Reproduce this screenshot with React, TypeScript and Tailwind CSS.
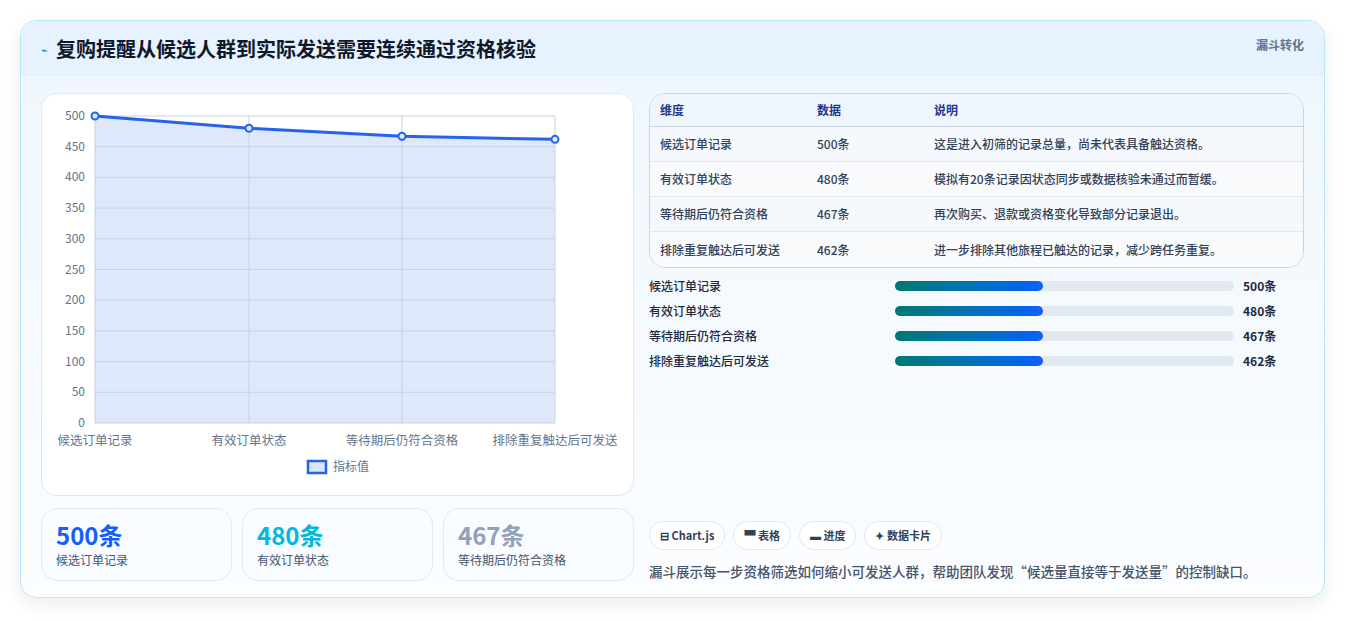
const rows = [
  { name: "候选订单记录", v: 500, note: "这是进入初筛的记录总量，尚未代表具备触达资格。" },
  { name: "有效订单状态", v: 480, note: "模拟有20条记录因状态同步或数据核验未通过而暂缓。" },
  { name: "等待期后仍符合资格", v: 467, note: "再次购买、退款或资格变化导致部分记录退出。" },
  { name: "排除重复触达后可发送", v: 462, note: "进一步排除其他旅程已触达的记录，减少跨任务重复。" },
];

function Chart() {
  const L = 53, R = 513, T = 22, B = 329;
  const xs = [L, 207, 360, R];
  const y = (v: number) => B - (v / 500) * (B - T);
  const pts = rows.map((r, i) => `${xs[i]},${y(r.v)}`).join(" ");
  const ticks = [0, 50, 100, 150, 200, 250, 300, 350, 400, 450, 500];
  return (
    <svg width="593" height="400" className="block">
      <polygon points={`${L},${B} ${pts} ${R},${B}`} fill="#dfe7fb" />
      {ticks.map((t) => (
        <g key={t}>
          <line x1={L} x2={R} y1={y(t)} y2={y(t)} stroke="#c7d2e4" strokeWidth="1" />
          <text x={43} y={y(t) + 4} textAnchor="end" fontSize="12" fill="#64748b">{t}</text>
        </g>
      ))}
      {xs.map((x) => (
        <line key={x} x1={x} x2={x} y1={T} y2={B} stroke="#c7d2e4" strokeWidth="1" />
      ))}
      <polyline points={pts} fill="none" stroke="#2563eb" strokeWidth="3" strokeLinejoin="round" />
      {rows.map((r, i) => (
        <circle key={i} cx={xs[i]} cy={y(r.v)} r="3.5" fill="#dbeafe" stroke="#2563eb" strokeWidth="2" />
      ))}
      {rows.map((r, i) => (
        <text key={r.name} x={xs[i]} y={351} textAnchor="middle" fontSize="12.5" fill="#64748b">{r.name}</text>
      ))}
      <rect x={266} y={367} width={18} height={12} fill="#dbe5fb" stroke="#2563eb" strokeWidth="2.5" />
      <text x={291} y={377} fontSize="12" fill="#64748b">指标值</text>
    </svg>
  );
}

export default function App() {
  return (
    <div className="min-h-[620px] bg-white p-5" style={{ fontFamily: '"Noto Sans CJK SC", "Noto Sans", sans-serif' }}>
      <div className="h-[578px] overflow-hidden rounded-2xl border border-sky-200 bg-gradient-to-b from-[#eef6fd] to-[#fbfdff] shadow-[0_6px_18px_rgba(15,23,42,0.08)]">
        <div className="flex h-[55px] items-start justify-between border-b border-sky-100 bg-[#e6f2fd] px-5 pt-[13px]">
          <div className="flex items-center gap-2">
            <span className="text-[11px] text-blue-600">⌁</span>
            <span className="text-[20px] font-bold text-slate-900">复购提醒从候选人群到实际发送需要连续通过资格核验</span>
          </div>
          <span className="pt-[2px] text-[12px] font-bold text-slate-500">漏斗转化</span>
        </div>
        <div className="flex gap-[15px] px-5 pt-[17px]">
          <div className="w-[593px] shrink-0">
            <div className="h-[403px] rounded-2xl border border-slate-200 bg-white">
              <Chart />
            </div>
            <div className="mt-[12px] flex gap-[10px]">
              {[
                { v: "500条", l: "候选订单记录", c: "text-blue-600" },
                { v: "480条", l: "有效订单状态", c: "text-cyan-500" },
                { v: "467条", l: "等待期后仍符合资格", c: "text-slate-400" },
              ].map((s) => (
                <div key={s.l} className="h-[73px] w-[191px] rounded-2xl border border-slate-200 bg-[#f8fbff] px-[14px] pt-[10px]">
                  <div className={`text-[24px] font-bold leading-[32px] ${s.c}`}>{s.v}</div>
                  <div className="text-[12px] text-slate-600">{s.l}</div>
                </div>
              ))}
            </div>
          </div>
          <div className="flex flex-1 flex-col">
            <div className="overflow-hidden rounded-2xl border border-slate-300 bg-white text-[12px] text-slate-700">
              <div className="flex h-[33px] items-center border-b border-slate-300 bg-[#eef5fd] font-bold text-blue-900">
                <div className="w-[167px] pl-[10px]">维度</div>
                <div className="w-[117px]">数据</div>
                <div>说明</div>
              </div>
              {rows.map((r, i) => (
                <div key={r.name} className={`flex h-[35px] items-center font-medium ${i < 3 ? "border-b border-slate-200" : ""} ${i % 2 ? "bg-[#f8fafc]" : "bg-[#f5f9fd]"}`}>
                  <div className="w-[167px] pl-[10px]">{r.name}</div>
                  <div className="w-[117px]">{r.v}条</div>
                  <div>{r.note}</div>
                </div>
              ))}
            </div>
            <div className="mt-[9px] flex flex-col gap-[7px]">
              {rows.map((r) => (
                <div key={r.name} className="flex h-[18px] items-center text-[12px] font-medium text-slate-800">
                  <div className="w-[246px]">{r.name}</div>
                  <div className="h-[10px] w-[339px] rounded-full bg-slate-200">
                    <div className="h-full w-[148px] rounded-full bg-gradient-to-r from-teal-700 to-blue-600" />
                  </div>
                  <div className="pl-[9px] font-bold">{r.v}条</div>
                </div>
              ))}
            </div>
            <div className="mt-[151px] flex gap-[8px] text-[11px] font-bold text-slate-700">
              {["⊟ Chart.js", "▀ 表格", "▬ 进度", "✦ 数据卡片"].map((c) => (
                <span key={c} className="flex h-[29px] items-center rounded-full border border-slate-200 bg-white px-[10px]">{c}</span>
              ))}
            </div>
            <div className="mt-[11px] text-[13.5px] font-medium text-slate-600">漏斗展示每一步资格筛选如何缩小可发送人群，帮助团队发现“候选量直接等于发送量”的控制缺口。</div>
          </div>
        </div>
      </div>
    </div>
  );
}
